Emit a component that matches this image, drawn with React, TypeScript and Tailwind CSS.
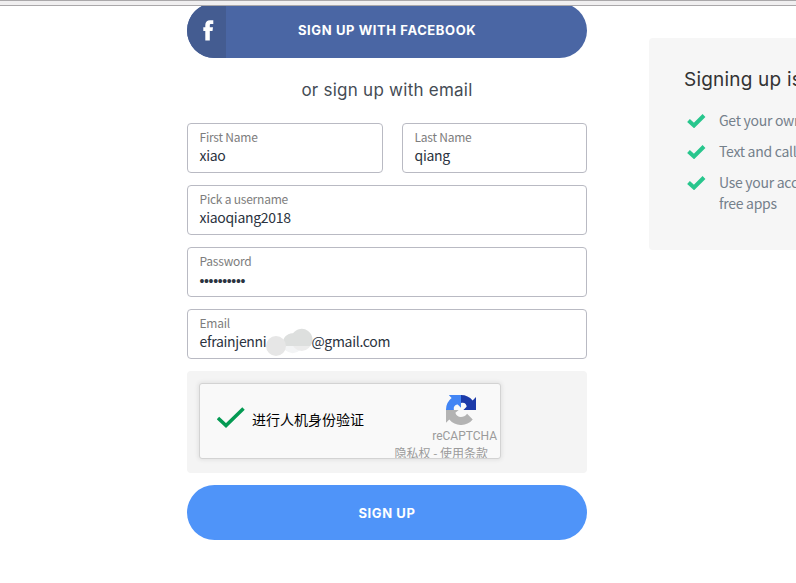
import type { ReactNode } from 'react';
import clsx from 'clsx';

interface FieldProps {
  label: string;
  className?: string;
  children: ReactNode;
}

const sans = "font-['Noto_Sans_CJK_SC',sans-serif]";
const display = "font-['Inter',sans-serif]";

function Field({ label, className, children }: Readonly<FieldProps>) {
  return (
    <label
      className={clsx(
        'block h-[50px] rounded border border-[#b9bac3] bg-white pl-[11.5px] pt-1',
        className
      )}
    >
      <span className="block h-[18px] text-[12px] leading-[18px] tracking-[-0.22px] text-[#7d7d7d]">{label}</span>
      <span className="flex h-[18px] items-center whitespace-nowrap text-[14px] leading-[18px] tracking-[-0.3px] text-[#2b3340]">
        {children}
      </span>
    </label>
  );
}

function FacebookButton() {
  return (
    <button className="-mt-[3px] flex h-[55px] w-full overflow-hidden rounded-full bg-[#4a66a4]">
      <span className="flex h-full w-[39px] items-center bg-[#445c91] pl-4">
        <svg width="11" height="21" viewBox="0 0 11 21" fill="white">
          <path d="M2.300 20.500V11H0.300V7.300H2.300V5C2.300 1.800 4.200 0.200 7 0.200H10.300V4H8.200C7.100 4 6.800 4.500 6.800 5.400V7.300H10L9.500 11H6.800V20.500Z" />
        </svg>
      </span>
      <span
        className={clsx(
          display,
          'relative -top-px self-center pl-[72px] text-[13px] font-bold leading-5 tracking-[0.6px] text-white'
        )}
      >
        SIGN UP WITH FACEBOOK
      </span>
    </button>
  );
}

// Blobs painted over the hidden part of the address
function Redaction() {
  return (
    <svg className="-mr-[2px] mt-px shrink-0" width="47" height="28" viewBox="0 0 47 28">
      <circle cx="26.700" cy="15.200" r="10" fill="#f3f4f5" />
      <circle cx="35.700" cy="13" r="10" fill="#ececec" />
      <path d="M17.200 18A10 10 0 0 1 27 5.200A10 10 0 0 1 44.400 18Z" fill="#dddfde" />
      <circle cx="10" cy="18" r="10" fill="#e6e6e6" />
    </svg>
  );
}

function RecaptchaLogo() {
  return (
    <svg width="30" height="30" viewBox="0 0 64 64">
      <path fill="#1c3aa9" d="M64 32V4.500l-7.200 7.200A32 32 0 0 0 32 0v17c8-2 12 3 12 8l-7 7Z" />
      <path fill="#4285f4" d="M32 0H6l6 6.500A32 32 0 0 0 0 32h17c-2-9 4-12 8-12l7 7Z" />
      <path fill="#b3b3b3" d="M0 32v27l7-7a32 32 0 0 0 50 0L45 40c-7 10-23 9-25-2l7-6Z" />
    </svg>
  );
}

function Recaptcha() {
  return (
    <div className="h-[102px] rounded bg-[#f4f4f4] p-3">
      <div className="flex h-[76px] w-[302px] overflow-hidden rounded-[3px] border border-[#d3d3d3] bg-[#f9f9f9] shadow-[0_0_4px_1px_rgba(0,0,0,0.08)]">
        <svg className="ml-[17px] mt-[23px] shrink-0" width="28" height="22" viewBox="0 0 28 22" fill="none">
          <path d="M1 11L9 18.500L26.500 1.500" stroke="#049a53" strokeWidth="3.500" />
        </svg>
        <span className="ml-[7px] mt-[25px] whitespace-nowrap text-[14px] leading-5 text-black">进行人机身份验证</span>
        <div className="ml-auto mr-[3px] mt-[11px] flex shrink-0 flex-col items-end text-[#9b9b9b]">
          <span className="mr-[21px] h-8 shrink-0">
            <RecaptchaLogo />
          </span>
          <span className="font-['Roboto',sans-serif] text-[12px] leading-[18px]">reCAPTCHA</span>
          <span className="mr-[9px] whitespace-nowrap text-[12px] leading-[16px]">隐私权 - 使用条款</span>
        </div>
      </div>
    </div>
  );
}

function Benefit({ children }: Readonly<{ children: ReactNode }>) {
  return (
    <li className="flex items-start">
      <svg className="mr-[13px] mt-1 shrink-0" width="19" height="14" viewBox="0 0 19 14" fill="none">
        <path d="M1.500 6.500L7 11.500L17 1.500" stroke="#28c68d" strokeWidth="4" />
      </svg>
      <span className="whitespace-nowrap text-[14px] leading-[21px] tracking-[-0.28px]">{children}</span>
    </li>
  );
}

export default function App() {
  return (
    <div className={clsx(sans, 'h-[583px] w-[796px] overflow-hidden bg-white')}>
      <div className="h-[6px] border-b border-t border-[#aaa8aa] bg-[#f0eff0]" />
      <div className="flex pl-[187px]">
        <main className="w-[400px] shrink-0">
          <div className="overflow-hidden">
            <FacebookButton />
          </div>
          <h2 className={clsx(display, 'mt-5 text-center text-[17px] leading-6 tracking-[0.25px] text-[#454c55]')}>
            or sign up with email
          </h2>
          <form className="mt-[21px] flex flex-col gap-3">
            <div className="flex justify-between">
              <Field label="First Name" className="w-[196px]">xiao</Field>
              <Field label="Last Name" className="w-[185px]">qiang</Field>
            </div>
            <Field label="Pick a username">xiaoqiang2018</Field>
            <Field label="Password">
              <span className="pt-1 font-['Liberation_Sans',sans-serif] text-[14px] tracking-[-0.35px]">••••••••••</span>
            </Field>
            <Field label="Email">
              efrainjenni
              <Redaction />
              @gmail.com
            </Field>
            <Recaptcha />
            <button
              type="button"
              className={clsx(
                display,
                'h-[55px] rounded-full bg-[#4f94f9] pt-0.5 text-[13px] font-bold tracking-[0.6px] text-white'
              )}
            >
              SIGN UP
            </button>
          </form>
        </main>
        <aside className="ml-[62px] mt-8 h-[212px] w-[300px] shrink-0 rounded bg-[#f6f6f6] pl-[35px] pt-7">
          <h3 className={clsx(display, 'whitespace-nowrap text-[19px] leading-7 tracking-[0.2px] text-[#333]')}>
            Signing up is
          </h3>
          <ul className="mt-4 flex flex-col gap-[10px] pl-[3px] text-[#74808b]">
            <Benefit>Get your own</Benefit>
            <Benefit>Text and call</Benefit>
            <Benefit>
              Use your acco
              <br />
              free apps
            </Benefit>
          </ul>
        </aside>
      </div>
    </div>
  );
}
